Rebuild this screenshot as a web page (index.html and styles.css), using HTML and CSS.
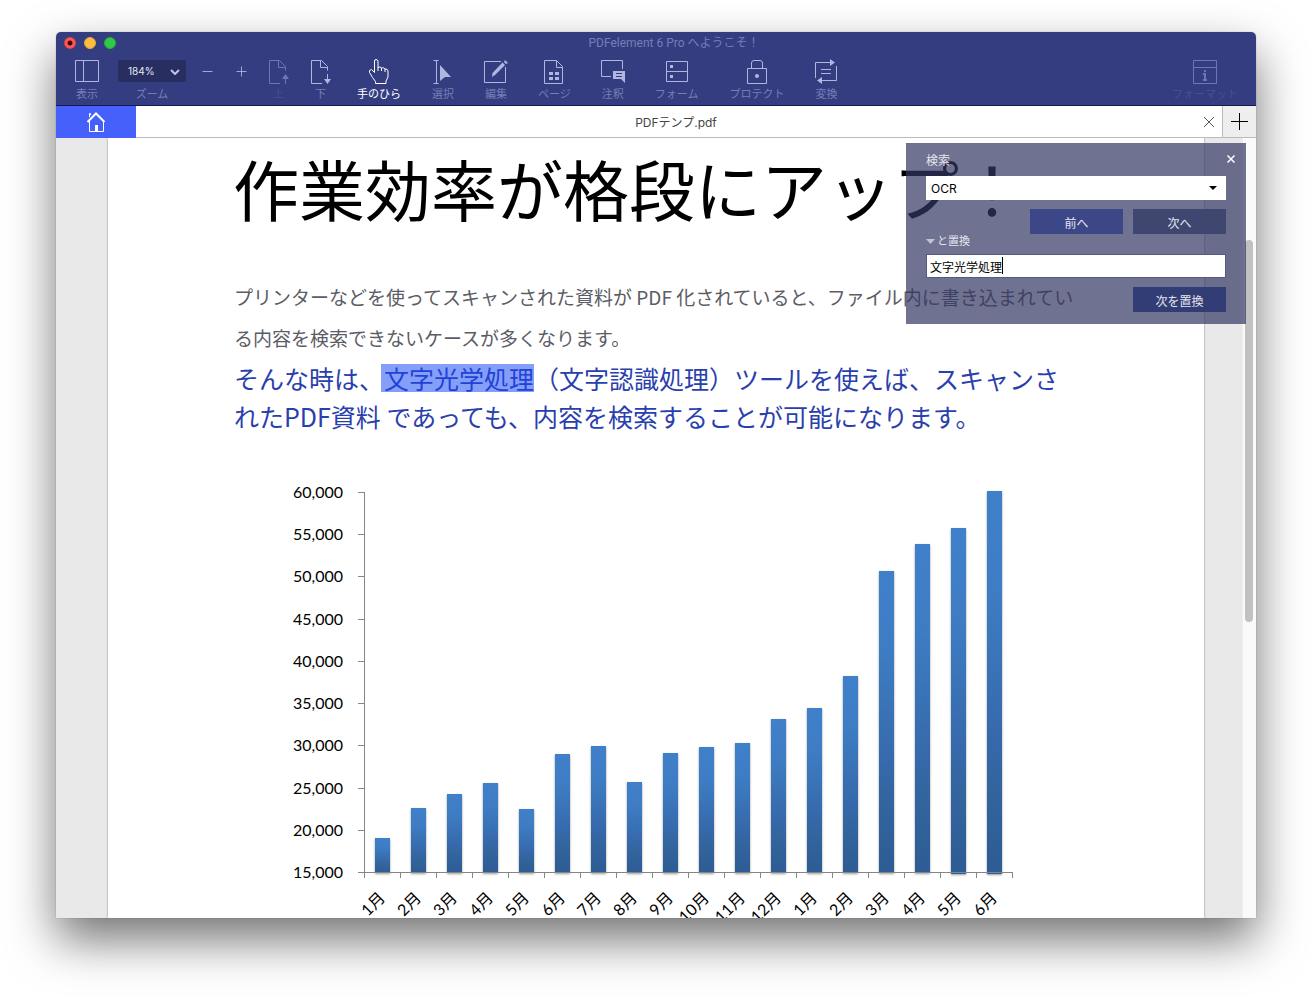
FILE: index.html
```html
<!DOCTYPE html>
<html lang="ja">
<head>
<meta charset="utf-8">
<title>PDFelement 6 Pro</title>
<link rel="stylesheet" href="styles.css">
</head>
<body>
<main class="window">
  <header class="chrome">
    <div class="titlebar">
      <div class="lights">
        <button class="light light-close" aria-label="閉じる"></button>
        <button class="light light-min" aria-label="最小化"></button>
        <button class="light light-max" aria-label="最大化"></button>
      </div>
      <h1 class="title">PDFelement 6 Pro へようこそ！</h1>
    </div>
    <nav class="toolbar">
      <button class="tool"><svg class="icon" width="24" height="26" viewBox="0 0 24 26"><path d="M.5 2.5h23v21H.5zM8.500 2.500v21"/></svg><span>表示</span></button>
      <div class="zoom-group">
        <div class="tool zoom">
          <div class="zoom-box">
            <select id="zoom" class="zoom-select"><option>184%</option></select>
            <svg class="zoom-arrow" width="10" height="6" viewBox="0 0 10 6"><path d="M1 1l4 4 4-4"/></svg>
          </div>
          <label for="zoom">ズーム</label>
        </div>
        <button class="step" aria-label="縮小"><svg width="11" height="26" viewBox="0 0 11 26"><path d="M.5 13.500h10"/></svg></button>
        <button class="step" aria-label="拡大"><svg width="11" height="26" viewBox="0 0 11 26"><path d="M.5 13.500h10M5.500 8.500v10"/></svg></button>
      </div>
      <div class="tools">
        <button class="tool dim"><svg class="icon" width="22" height="26" viewBox="0 0 22 26"><path d="M12 25.500H1.500v-23h10l6 6v4M10.500 2.500v7h7M17.500 19v7"/><path class="fill" d="M17.500 16l3.500 5h-7z"/></svg><span>上</span></button>
        <button class="tool"><svg class="icon" width="22" height="26" viewBox="0 0 22 26"><path d="M12 25.500H1.500v-23h10l6 6v4M10.500 2.500v7h7M17.500 16v6"/><path class="fill" d="M17.500 26l3.500-5h-7z"/></svg><span>下</span></button>
        <button class="tool active"><svg class="icon" width="20" height="26" viewBox="0 0 20 26"><path d="M6.500 25.500v-2l-3-4-3-5v-2l2-1 3 3V3q0-1.500 1.500-1.500T9 3v6.500q2-1.500 3.500.5 2-1 3.500 1 2.500-.5 3 2v6l-2 4v2.500zM9 9v4M12.500 10v3M16 11v3"/></svg><span>手のひら</span></button>
        <button class="tool"><svg class="icon" width="20" height="26" viewBox="0 0 20 26"><path d="M.5 2.500h5M.5 25.500h5M3.500 2.500v23"/><path class="fill" d="M7 7l11 12h-6l-5 4z"/></svg><span>選択</span></button>
        <button class="tool"><svg class="icon" width="24" height="26" viewBox="0 0 24 26"><path d="M17 3.500H.5v21h21V9"/><path class="fill" d="M18.500 4.500l2.500 2.500L11 17l-3 2 .5-4zM21 2l3 3-2 1-2-2z"/></svg><span>編集</span></button>
        <button class="tool"><svg class="icon" width="20" height="26" viewBox="0 0 20 26"><path d="M.5 2.500h12l6 6v17H.5zM12.500 2.500v7h6"/><path class="fill" d="M5 14h4v3H5zM11 14h4v3h-4zM5 19h4v3H5zM11 19h4v3h-4z"/></svg><span>ページ</span></button>
        <button class="tool"><svg class="icon" width="24" height="26" viewBox="0 0 24 26"><path d="M10 18.500H.5v-16h21V11"/><path class="fill" fill-rule="evenodd" d="M12 13h12v12l-4-4h-8zM15 15v1h6v-1zM15 18v1h6v-1z"/></svg><span>注釈</span></button>
        <button class="tool"><svg class="icon" width="22" height="26" viewBox="0 0 22 26"><path d="M.5 3.500h21v20H.5zM.5 13.500h21"/><path class="fill" d="M4 7h3v3H4zM4 17h3v3H4z"/></svg><span>フォーム</span></button>
        <button class="tool"><svg class="icon" width="20" height="26" viewBox="0 0 20 26"><path d="M.5 10.500h19v15H.5zM4.500 10V5q0-2.500 2.500-2.500h6q2.500 0 2.500 2.500v5"/><circle class="fill" cx="10" cy="18" r="2"/></svg><span>プロテクト</span></button>
        <button class="tool"><svg class="icon" width="24" height="26" viewBox="0 0 24 26"><path d="M1.500 20V4.500h16M22.500 8v14.500h-16M7 11.500h10M7 15.500h10"/><path class="fill" d="M16 1l5 3.500-5 3.500zM8 19l-5 3.500 5 3.500z"/></svg><span>変換</span></button>
      </div>
      <button class="tool dim format"><svg class="icon" width="24" height="26" viewBox="0 0 24 26"><path d="M.5 2.500h23v23H.5zM.5 9.500h23"/><path class="fill" d="M11 12h2v2h-2zM10 15h3v6h1v2h-4v-2h1v-4h-1z"/></svg><span>フォーマット</span></button>
    </nav>
  </header>

  <div class="tabs">
    <button class="home" aria-label="ホーム"><svg width="20" height="20" viewBox="0 0 20 20"><path class="roof" d="M1.500 10L10 1.500l8.500 8.500"/><path d="M3.500 9v10.500h14V9M3.500 5V1.500h1V3"/><path class="fill" d="M9 13h3v6H9z"/></svg></button>
    <div class="tab">
      <span class="tab-name">PDFテンプ.pdf</span>
      <button class="tab-close" aria-label="タブを閉じる"><svg width="10" height="10" viewBox="0 0 10 10"><path d="M0 0l10 10M10 0L0 10"/></svg></button>
    </div>
    <button class="tab-add" aria-label="新規タブ"><svg width="17" height="17" viewBox="0 0 17 17"><path d="M0 8.500h17M8.500 0v17"/></svg></button>
  </div>

  <div class="viewer">
    <div class="canvas">
      <article class="page">
        <h2 class="headline">作業効率が格段にアップ！</h2>
        <p class="lead">プリンターなどを使ってスキャンされた資料が PDF 化されていると、ファイル内に書き込まれてい<br>る内容を検索できないケースが多くなります。</p>
        <p class="note">そんな時は、<mark>文字光学処理</mark>（文字認識処理）ツールを使えば、スキャンさ<br>れたPDF資料 であっても、内容を検索することが可能になります。</p>
        <svg class="chart" width="740" height="450" viewBox="284 480 740 450" role="img" aria-label="月別の推移">
          <defs>
            <linearGradient id="bar" x1="0" y1="0" x2="0" y2="1">
              <stop offset="0" stop-color="#4080ca"/>
              <stop offset=".25" stop-color="#3e7dc4"/>
              <stop offset=".65" stop-color="#3669ab"/>
              <stop offset=".75" stop-color="#33659f"/>
              <stop offset="1" stop-color="#2e5c94"/>
            </linearGradient>
          </defs>
          <g class="scale">
            <text x="343" y="498">60,000</text><text x="343" y="540">55,000</text><text x="343" y="582">50,000</text><text x="343" y="625">45,000</text><text x="343" y="667">40,000</text><text x="343" y="709">35,000</text><text x="343" y="751">30,000</text><text x="343" y="794">25,000</text><text x="343" y="836">20,000</text><text x="343" y="878">15,000</text>
          </g>
          <g class="bars">
            <rect x="375" y="838" width="15" height="35"/><rect x="411" y="808" width="15" height="65"/><rect x="447" y="794" width="15" height="79"/><rect x="483" y="783" width="15" height="90"/><rect x="519" y="809" width="15" height="64"/><rect x="555" y="754" width="15" height="119"/><rect x="591" y="746" width="15" height="127"/><rect x="627" y="782" width="15" height="91"/><rect x="663" y="753" width="15" height="120"/><rect x="699" y="747" width="15" height="126"/><rect x="735" y="743" width="15" height="130"/><rect x="771" y="719" width="15" height="154"/><rect x="807" y="708" width="15" height="165"/><rect x="843" y="676" width="15" height="197"/><rect x="879" y="571" width="15" height="302"/><rect x="915" y="544" width="15" height="329"/><rect x="951" y="528" width="15" height="346"/><rect x="987" y="491" width="15" height="383"/>
          </g>
          <path class="axis" d="M364.500 492v386M358 492.500h6M358 534.500h6M358 576.500h6M358 619.500h6M358 661.500h6M358 703.500h6M358 745.500h6M358 788.500h6M358 830.500h6M358 872.500h655M400.500 873v5M436.500 873v5M472.500 873v5M508.500 873v5M544.500 873v5M580.500 873v5M616.500 873v5M652.500 873v5M688.500 873v5M724.500 873v5M760.500 873v5M796.500 873v5M832.500 873v5M868.500 873v5M904.500 873v5M940.500 873v5M976.500 873v5M1012.500 873v5"/>
          <g class="months">
            <text transform="translate(386 899) rotate(-45)">1月</text><text transform="translate(422 899) rotate(-45)">2月</text><text transform="translate(458 899) rotate(-45)">3月</text><text transform="translate(494 899) rotate(-45)">4月</text><text transform="translate(530 899) rotate(-45)">5月</text><text transform="translate(566 899) rotate(-45)">6月</text><text transform="translate(602 899) rotate(-45)">7月</text><text transform="translate(638 899) rotate(-45)">8月</text><text transform="translate(674 899) rotate(-45)">9月</text><text transform="translate(710 899) rotate(-45)">10月</text><text transform="translate(746 899) rotate(-45)">11月</text><text transform="translate(782 899) rotate(-45)">12月</text><text transform="translate(818 899) rotate(-45)">1月</text><text transform="translate(854 899) rotate(-45)">2月</text><text transform="translate(890 899) rotate(-45)">3月</text><text transform="translate(926 899) rotate(-45)">4月</text><text transform="translate(962 899) rotate(-45)">5月</text><text transform="translate(998 899) rotate(-45)">6月</text>
          </g>
        </svg>
      </article>
    </div>
    <div class="scrollbar"><div class="thumb"></div></div>

    <form class="search">
      <div class="search-head">
        <label for="find">検索</label>
        <button type="button" class="search-close" aria-label="閉じる"><svg width="8" height="8" viewBox="0 0 8 8"><path d="M.5.5l7 7M7.500.5l-7 7"/></svg></button>
      </div>
      <div class="find-box">
        <select id="find" class="field"><option>OCR</option></select>
        <svg class="find-arrow" width="8" height="4" viewBox="0 0 8 4"><path d="M0 0h8L4 4z"/></svg>
      </div>
      <div class="actions">
        <button type="button" class="btn btn-prev">前へ</button>
        <button type="button" class="btn btn-next">次へ</button>
      </div>
      <label class="replace-label" for="replace"><svg width="9" height="5" viewBox="0 0 9 5"><path d="M0 0h9L4.500 5z"/></svg>と置換</label>
      <div class="replace-box">
        <input id="replace" class="field" type="text" value="文字光学処理">
        <span class="caret"></span>
      </div>
      <div class="actions">
        <button type="button" class="btn btn-replace">次を置換</button>
      </div>
    </form>
  </div>
</main>
</body>
</html>
```
FILE: styles.css
```css
* { box-sizing: border-box; }

html, body { height: 100%; }

body {
  margin: 0;
  padding: 32px 56px 80px;
  overflow: hidden;
  background: #fff;
  font-family: Inter, "Noto Sans CJK JP", sans-serif;
  font-size: 12px;
}

button {
  padding: 0;
  border: 0;
  background: none;
  color: inherit;
  font: inherit;
}

select, input { font: inherit; }

h1, h2, p { margin: 0; font-weight: 400; }

.window {
  display: flex;
  flex-direction: column;
  height: 100%;
  overflow: hidden;
  border-radius: 5px 5px 0 0;
  background: #e9e9e9;
  box-shadow: 0 0 1px rgba(0, 0, 0, .5), 0 22px 48px rgba(0, 0, 0, .55);
}

/* Title bar and toolbar */
.chrome {
  flex: none;
  border-bottom: 1px solid #14185a;
  background: #343d7f;
  color: #767eb8;
}

.titlebar {
  display: flex;
  align-items: center;
  height: 22px;
  padding: 0 24px 0 8px;
}

.lights { display: flex; gap: 8px; }

.light {
  width: 12px;
  height: 12px;
  border: 1px solid;
  border-radius: 50%;
}

.light-close {
  border-color: #e0443e;
  background: radial-gradient(circle, #4d0000 2px, #fc5b57 3px);
}

.light-min { border-color: #e5a73a; background: #fdbe41; }
.light-max { border-color: #24b034; background: #34c84a; }

.title {
  flex: 1;
  text-align: center;
  font-family: Roboto, "Noto Sans CJK JP", sans-serif;
  font-size: 12px;
  line-height: 22px;
}

.toolbar {
  display: flex;
  gap: 20px;
  height: 51px;
  padding: 4px 18px 0 20px;
  font-size: 11px;
}

.tool {
  display: flex;
  flex-direction: column;
  align-items: center;
  height: 46px;
  white-space: nowrap;
  line-height: 16px;
}

.tool span, .tool label { margin-top: 2px; }

.tool.dim { color: #465091; }
.tool.dim .icon { color: #6c76b8; }
.tool.active, .tool.active .icon { color: #fff; }

/* Icons may be wider than a short label, which alone sets the column width */
.icon {
  flex: none;
  margin: 0 -6px;
  fill: none;
  stroke: currentColor;
  color: #b0b6df;
}

.icon .fill { fill: currentColor; stroke: none; }

.zoom-group { display: flex; gap: 16px; }
.step { margin-right: 7px; height: 26px; }
.step:last-child { margin-right: 6px; }
.step svg { display: block; stroke: #a0a7d6; }

.zoom-box { position: relative; height: 26px; padding-top: 2px; }

.zoom-select {
  display: block;
  width: 68px;
  height: 22px;
  padding: 0 10px;
  border: 0;
  border-radius: 2px;
  appearance: none;
  background: #282f60;
  color: #e6e8f5;
  font-size: 10px;
}

.zoom-arrow {
  position: absolute;
  top: 11px;
  right: 6px;
  fill: none;
  stroke: #c0c5e6;
  stroke-width: 2;
}

.tools { display: flex; gap: 31px; }

.format { margin-left: auto; }

/* Tabs */
.tabs {
  display: flex;
  flex: none;
  height: 32px;
  background: #eee;
}

.home {
  display: grid;
  place-items: center;
  width: 80px;
  background: #4660fb;
}

.home svg { fill: none; stroke: #fff; }
.home .roof { stroke-width: 2; }
.home .fill { fill: #fff; stroke: none; }

.tab {
  display: flex;
  flex: 1;
  align-items: center;
  padding: 0 8px 0 12px;
  border-right: 1px solid #bbb;
  border-bottom: 1px solid #bbb;
  background: #fff;
  color: #444;
}

.tab-name { flex: 1; padding-top: 2px; text-align: center; line-height: 30px; }
.tab-close svg { display: block; stroke: #555; }

.tab-add {
  display: grid;
  place-items: center;
  width: 33px;
  border-bottom: 1px solid #bbb;
}

.tab-add svg { stroke: #000; }

/* Document */
.viewer {
  position: relative;
  display: flex;
  flex: 1;
  min-height: 0;
}

.canvas { flex: 1; min-width: 0; padding: 0 38px 0 52px; overflow: hidden; }

.page {
  padding: 0 0 40px 126px;
  background: #fff;
  box-shadow: 0 0 2px rgba(0, 0, 0, .4);
  font-family: "Noto Sans CJK JP", sans-serif;
  white-space: nowrap;
}

.headline {
  margin-left: -1px;
  color: #000;
  font-size: 66px;
  line-height: 98px;
}

.lead {
  padding-top: 40px;
  color: #5c5c66;
  font-size: 19px;
  line-height: 41px;
}

.note { padding-top: 1px; color: #2a3fae; font-size: 25px; line-height: 38px; }

.note mark {
  display: inline-block;
  height: 28px;
  margin-left: -3px;
  padding-left: 3px;
  background: #859ff9;
  color: #1f42d8;
  line-height: 28px;
}

.chart { display: block; margin: 45px 0 0 50px; }

.scale text, .months text {
  fill: #000;
  font-family: Lato, "Noto Sans CJK JP", sans-serif;
  font-size: 16px;
  text-anchor: end;
}

.bars rect { fill: url(#bar); filter: drop-shadow(0 1px 1px rgba(0, 0, 0, .4)); }

.axis { fill: none; stroke: #868686; }

.scrollbar {
  width: 14px;
  padding: 102px 3px 0 2px;
  border-left: 1px solid #eee;
  background: #fafafa;
}

.thumb { height: 382px; border-radius: 4px; background: #c1c1c1; }

/* Search panel */
.search {
  position: absolute;
  top: 5px;
  right: 10px;
  width: 340px;
  padding: 9px 20px 12px;
  background: rgba(51, 54, 99, .7);
  color: #e4e5ee;
  line-height: 18px;
}

.search-head {
  display: flex;
  justify-content: space-between;
  margin-right: -9px;
  height: 24px;
}

.search-close { height: 14px; }
.search-close svg { display: block; stroke: #fff; stroke-width: 1.5; }

.field {
  display: block;
  width: 100%;
  height: 24px;
  padding: 1px 5px 0;
  border: 0;
  border-radius: 0;
  appearance: none;
  background: #fff;
  color: #000;
}

.find-box, .replace-box { position: relative; }

.find-arrow { position: absolute; top: 10px; right: 9px; }

.actions { display: flex; justify-content: flex-end; gap: 10px; padding-top: 9px; }

.btn { width: 93px; height: 25px; padding-top: 5px; color: #e4e5ee; }

.btn-prev { background: #3c4787; }
.btn-next { background: #3f4770; }
.btn-replace { background: #333d75; }

.replace-label { display: flex; align-items: center; gap: 2px; margin-bottom: 6px; font-size: 11px; line-height: 14px; }
.replace-label svg { fill: #c3c4d2; }

.replace-box .field { padding: 0 3px; border: 1px solid #555a80; }

.caret {
  position: absolute;
  top: 3px;
  left: 76px;
  width: 1px;
  height: 17px;
  background: #000;
}
```
